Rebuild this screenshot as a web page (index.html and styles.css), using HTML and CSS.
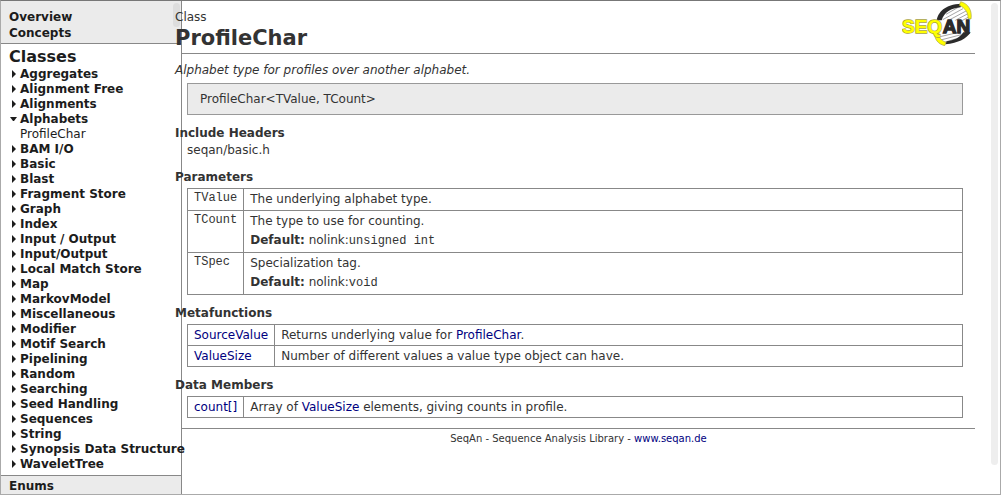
FILE: index.html
```html
<!DOCTYPE html>
<html lang="en">
<head>
<meta charset="utf-8">
<title>ProfileChar</title>
<link rel="stylesheet" href="styles.css">
</head>
<body>
<svg class="defs" aria-hidden="true"><symbol id="closed" viewBox="0 0 8 8"><path d="M3 0V8L7 4Z"/></symbol><symbol id="open" viewBox="0 0 8 8"><path d="M1 2H8L5 6H4Z"/></symbol></svg>
<div class="window">
<nav class="sidebar">
  <div class="group"><a href="#">Overview</a><a href="#">Concepts</a><span class="thumb"></span></div>
  <div class="current">
    <h2><a href="#">Classes</a></h2>
    <ul class="tree">
      <li><a href="#"><svg><use href="#closed"/></svg>Aggregates</a></li>
      <li><a href="#"><svg><use href="#closed"/></svg>Alignment Free</a></li>
      <li><a href="#"><svg><use href="#closed"/></svg>Alignments</a></li>
      <li><a href="#"><svg><use href="#open"/></svg>Alphabets</a>
        <ul><li><a href="#">ProfileChar</a></li></ul></li>
      <li><a href="#"><svg><use href="#closed"/></svg>BAM I/O</a></li>
      <li><a href="#"><svg><use href="#closed"/></svg>Basic</a></li>
      <li><a href="#"><svg><use href="#closed"/></svg>Blast</a></li>
      <li><a href="#"><svg><use href="#closed"/></svg>Fragment Store</a></li>
      <li><a href="#"><svg><use href="#closed"/></svg>Graph</a></li>
      <li><a href="#"><svg><use href="#closed"/></svg>Index</a></li>
      <li><a href="#"><svg><use href="#closed"/></svg>Input / Output</a></li>
      <li><a href="#"><svg><use href="#closed"/></svg>Input/Output</a></li>
      <li><a href="#"><svg><use href="#closed"/></svg>Local Match Store</a></li>
      <li><a href="#"><svg><use href="#closed"/></svg>Map</a></li>
      <li><a href="#"><svg><use href="#closed"/></svg>MarkovModel</a></li>
      <li><a href="#"><svg><use href="#closed"/></svg>Miscellaneous</a></li>
      <li><a href="#"><svg><use href="#closed"/></svg>Modifier</a></li>
      <li><a href="#"><svg><use href="#closed"/></svg>Motif Search</a></li>
      <li><a href="#"><svg><use href="#closed"/></svg>Pipelining</a></li>
      <li><a href="#"><svg><use href="#closed"/></svg>Random</a></li>
      <li><a href="#"><svg><use href="#closed"/></svg>Searching</a></li>
      <li><a href="#"><svg><use href="#closed"/></svg>Seed Handling</a></li>
      <li><a href="#"><svg><use href="#closed"/></svg>Sequences</a></li>
      <li><a href="#"><svg><use href="#closed"/></svg>String</a></li>
      <li><a href="#"><svg><use href="#closed"/></svg>Synopsis Data Structure</a></li>
      <li><a href="#"><svg><use href="#closed"/></svg>WaveletTree</a></li>
    </ul>
  </div>
  <div class="group last"><a href="#">Enums</a></div>
</nav>
<main class="page">
  <header class="head">
    <div class="titles"><p class="kind">Class</p><h1>ProfileChar</h1></div>
    <svg class="logo" viewBox="36 4 213 135" role="img" aria-label="SeqAn">
      <g fill="none" stroke="#777" stroke-width="2"><path d="M168 44L206 22M158 60L219 27M172 64L228 34M196 62L234 42M214 64L236 52M146 112L206 98M152 121L214 105M160 129L196 118"/></g>
      <path d="M140 62C144 38 164 14 214 12L212 23C184 25 162 38 155 62Z" fill="#2b2b2b"/>
      <path d="M242 98C230 116 206 131 166 134L170 125C196 121 212 111 220 98Z" fill="#2b2b2b"/>
      <path d="M212 6C236 12 247 34 243 58L234 56C235 40 226 25 208 17Z" fill="#ff0" stroke="#a8a23c" stroke-width="2"/>
      <path d="M134 97C132 117 143 133 164 138L168 128C152 122 146 112 147 99Z" fill="#ff0" stroke="#a8a23c" stroke-width="2"/>
      <g class="mark"><text x="36" y="100" fill="#ff0" stroke="#a8a23c" stroke-width="4">SEQ</text><text x="158" y="100" fill="#2b2b2b" stroke="#2b2b2b" stroke-width="4">AN</text></g>
    </svg>
  </header>
  <p class="summary">Alphabet type for profiles over another alphabet.</p>
  <div class="signature">ProfileChar&lt;TValue, TCount&gt;</div>
  <h3>Include Headers</h3>
  <p class="include">seqan/basic.h</p>
  <h3>Parameters</h3>
  <table class="params">
    <tr><th scope="row"><code>TValue</code></th><td>The underlying alphabet type.</td></tr>
    <tr><th scope="row"><code>TCount</code></th><td>The type to use for counting.<p><b>Default:</b> nolink:<code>unsigned int</code></p></td></tr>
    <tr><th scope="row"><code>TSpec</code></th><td>Specialization tag.<p><b>Default:</b> nolink:<code>void</code></p></td></tr>
  </table>
  <h3>Metafunctions</h3>
  <table>
    <tr><th scope="row"><a href="#">SourceValue</a></th><td>Returns underlying value for <a href="#">ProfileChar</a>.</td></tr>
    <tr><th scope="row"><a href="#">ValueSize</a></th><td>Number of different values a value type object can have.</td></tr>
  </table>
  <h3>Data Members</h3>
  <table>
    <tr><th scope="row"><a href="#">count[]</a></th><td>Array of <a href="#">ValueSize</a> elements, giving counts in profile.</td></tr>
  </table>
  <footer>SeqAn - Sequence Analysis Library - <a href="#">www.seqan.de</a></footer>
  <span class="track"></span>
</main>
</div>
</body>
</html>
```
FILE: styles.css
```css
* { box-sizing: border-box; }
body {
  margin: 0;
  font: 12px/16px Verdana, "DejaVu Sans", sans-serif;
  color: #333;
  background: #fff;
}
h1, h2, h3, p, ul { margin: 0; padding: 0; }
ul { list-style: none; }
a { color: #000080; text-decoration: none; }
.defs { display: none; }
.window {
  display: flex;
  min-height: 100vh;
  border: 1px solid #aaa;
  border-top-color: #777;
}

.sidebar {
  display: flex;
  flex-direction: column;
  flex: none;
  width: 181px;
  border-right: 1px solid #888;
}
.sidebar a { display: block; color: #1c1c1c; white-space: nowrap; }
.group {
  position: relative;
  padding: 8px 8px 2px;
  font-weight: bold;
  background: #ebebeb;
  border-bottom: 1px solid #888;
}
.group.last { flex: 1; padding-top: 2px; padding-bottom: 0; border-top: 1px solid #888; border-bottom: 0; }
.thumb {
  position: absolute;
  top: 2px;
  right: 1px;
  width: 7px;
  height: 24px;
  border-radius: 4px;
  background: #ddd;
}
.current { padding: 2px 0 3px 8px; }
.current h2 { font-size: 16px; line-height: 21px; }
.tree { font-weight: bold; line-height: 15px; }
.tree a { display: flex; align-items: center; gap: 3px; }
.tree svg { flex: none; width: 8px; height: 8px; margin-bottom: 1px; fill: #1c1c1c; }
.tree ul { padding-left: 11px; font-weight: normal; }

.page { position: relative; flex: 1; min-width: 0; padding-right: 25px; }
.head {
  display: flex;
  justify-content: space-between;
  align-items: flex-start;
  height: 53px;
  border-bottom: 1px solid #888;
}
.titles { margin-left: -7px; padding-top: 8px; }
h1 { font-size: 21px; line-height: 26px; }
.logo { width: 71px; height: 45px; margin-right: 2px; }
.mark { font: bold 57px "Liberation Sans", Arial, sans-serif; paint-order: stroke; }
.summary { margin: 8px 0 5px -7px; font-style: italic; }
.signature {
  margin: 0 12px 10px 5px;
  padding: 7px 12px;
  background: #ebebeb;
  border: 1px solid #999;
}
h3 { margin: 0 0 3px -7px; font-size: 12px; line-height: 16px; }
.include { margin: -2px 5px 11px; }
table {
  width: calc(100% - 17px);
  margin: 0 12px 10px 5px;
  border-collapse: collapse;
}
th, td { padding: 2px 6px; border: 1px solid #888; text-align: left; vertical-align: top; }
th { width: 1px; font-weight: normal; white-space: nowrap; }
.params th, .params td { padding-top: 2px; padding-bottom: 3px; }
td p { margin-top: 3px; padding-bottom: 1px; }
code { font: 12px/14px "Courier New", "Liberation Mono", monospace; }
th code { display: block; }
footer { border-top: 1px solid #888; padding-top: 2px; font-size: 10px; text-align: center; }
.track {
  position: absolute;
  top: 2px;
  right: 2px;
  bottom: 29px;
  width: 7px;
  border-radius: 4px;
  background: #eee;
}
```
